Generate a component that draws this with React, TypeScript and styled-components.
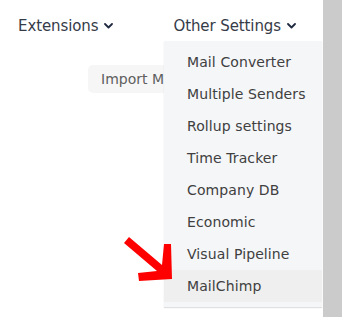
import styled, { createGlobalStyle } from "styled-components";

const GlobalStyle = createGlobalStyle`
  html, body {
    margin: 0;
    padding: 0;
    background: #ffffff;
  }
  body {
    font-family: "DejaVu Sans", "Liberation Sans", sans-serif;
  }
`;

const menuItems = [
  "Mail Converter",
  "Multiple Senders",
  "Rollup settings",
  "Time Tracker",
  "Company DB",
  "Economic",
  "Visual Pipeline",
  "MailChimp",
];

const Page = styled.div`
  display: flex;
  width: 343px;
  height: 317px;
  overflow: hidden;
`;

const Main = styled.div`
  position: relative;
  width: 323px;
  flex-shrink: 0;
`;

const Scrollbar = styled.div`
  width: 19px;
  background: #cbcbcb;
  flex-shrink: 0;
`;

const NavBar = styled.div`
  display: flex;
  align-items: center;
  padding: 16px 0 0 18px;
  height: 20px;
`;

const NavItem = styled.div<{ $gap: number }>`
  position: relative;
  display: flex;
  align-items: center;
  gap: 6px;
  margin-right: ${(p) => p.$gap}px;
  font-size: 15px;
  line-height: 20px;
  color: #363b48;
  letter-spacing: -0.1px;
  white-space: nowrap;
`;

const Chevron = () => (
  <svg width="9" height="6" viewBox="0 0 9 6">
    <polyline points="1,1 4.5,4.5 8,1" fill="none" stroke="#1f2940" strokeWidth="1.8" strokeLinecap="round" strokeLinejoin="round" />
  </svg>
);

const ImportButton = styled.div`
  margin: 29px 0 0 88px;
  width: 140px;
  height: 28px;
  display: flex;
  align-items: center;
  padding-left: 13px;
  box-sizing: border-box;
  background: #f6f6f6;
  border-radius: 5px;
  font-size: 14px;
  color: #5e5e5e;
  white-space: nowrap;
  overflow: hidden;
`;

const Dropdown = styled.div`
  position: absolute;
  top: 41px;
  left: 164px;
  width: 158px;
  padding: 5px 0;
  background: #f5f6f8;
  box-shadow: 0 1px 1px rgba(0, 0, 0, 0.12);
  z-index: 2;
`;

const MenuItem = styled.div<{ $active?: boolean }>`
  height: 32px;
  display: flex;
  align-items: center;
  padding-left: 23px;
  font-size: 14px;
  color: #404040;
  letter-spacing: 0.1px;
  white-space: nowrap;
  background: ${(p) => (p.$active ? "#efefef" : "transparent")};
`;

const Arrow = styled.svg`
  position: absolute;
  left: 118px;
  top: 234px;
  z-index: 3;
`;

export default function App() {
  return (
    <>
      <GlobalStyle />
      <Page>
        <Main>
          <NavBar>
            <NavItem $gap={60}>
              Extensions <Chevron />
            </NavItem>
            <NavItem $gap={0}>
              Other Settings <Chevron />
            </NavItem>
          </NavBar>
          <ImportButton>Import Mailchimp</ImportButton>
          <Dropdown>
            {menuItems.map((item) => (
              <MenuItem key={item} $active={item === "MailChimp"}>
                {item}
              </MenuItem>
            ))}
          </Dropdown>
          <Arrow width="60" height="50" viewBox="118 234 60 50">
            <polygon
              points="124,243 129,237 162,265 164,244 171,244 172,279 139,281 138,273 157,271"
              fill="#ff0000"
            />
          </Arrow>
        </Main>
        <Scrollbar />
      </Page>
    </>
  );
}
